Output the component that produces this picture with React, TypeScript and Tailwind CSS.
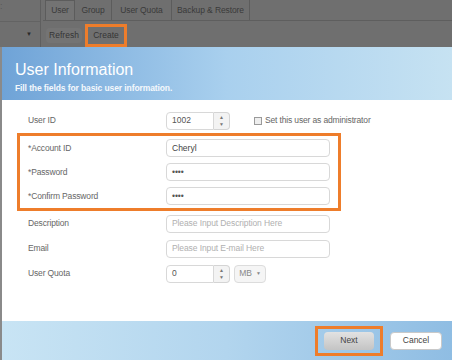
const font = { fontFamily: '"Liberation Sans", Arial, sans-serif' };

function Spinner() {
  return (
    <div className="flex h-[18px] w-[16px] flex-col items-center justify-center gap-[2px] rounded-r-sm border border-l-0 border-[#d4d4d4] bg-[#f3f3f3] text-[5px] leading-none text-[#777]">
      <span>▲</span>
      <span>▼</span>
    </div>
  );
}

function Field({ placeholder, value }: { placeholder?: string; value?: string }) {
  return (
    <div className="flex h-[18px] w-[164px] items-center rounded-sm border border-[#d8d8d8] bg-white px-[5px] text-[8.5px] tracking-[-0.1px]">
      {value ? (
        <span className="text-[#555]">{value}</span>
      ) : (
        <span className="text-[#b0b0b0]">{placeholder}</span>
      )}
    </div>
  );
}

function Row({ label, h = 'h-[25px]', children }: { label: string; h?: string; children: React.ReactNode }) {
  return (
    <div className={`flex items-center ${h}`}>
      <span className="w-[138px] text-[8.5px] tracking-[-0.15px] text-[#666]">{label}</span>
      {children}
    </div>
  );
}

export default function App() {
  return (
    <div className="flex h-[360px] w-[452px] flex-col overflow-hidden bg-[#6f6f6f]" style={font}>
      {/* Dimmed page behind the dialog */}
      <div className="flex h-[47px] shrink-0">
        <div className="flex w-[41px] flex-col border-r border-[#5f5f5f]">
          <div className="h-[22px] border-b border-[#636363] text-[9px] text-[#585858]">:</div>
          <div className="mt-[6px] flex h-[12px] items-center justify-end pr-[8px] text-[6px] text-[#2a2a2a]">▼</div>
        </div>
        <div className="flex flex-1 flex-col pl-[2px]">
          <div className="flex h-[23px] items-end whitespace-nowrap border-b border-[#5e5e5e] pl-[2px] text-[8.5px] tracking-[-0.1px] text-[#3a3a3a]">
            <div className="flex h-[20px] w-[30px] items-center justify-center border border-b-0 border-[#5c5c5c] bg-[#737373]">User</div>
            <div className="flex h-[20px] w-[37px] items-center justify-center border-r border-[#5c5c5c]">Group</div>
            <div className="flex h-[20px] w-[60px] items-center justify-center border-r border-[#5c5c5c]">User Quota</div>
            <div className="flex h-[20px] w-[78px] items-center justify-center border-r border-[#5c5c5c]">Backup &amp; Restore</div>
          </div>
          <div className="flex items-center gap-[3px] pl-[3px] pt-[3px] text-[8.5px] text-[#353535]">
            <div className="flex h-[15px] w-[36px] items-center justify-center rounded-sm bg-[#747474]">Refresh</div>
            <div className="flex h-[23px] w-[42px] items-center justify-center border-[3px] border-[#ee7d2b] bg-[#707070]">Create</div>
          </div>
        </div>
      </div>

      {/* Dialog */}
      <div className="flex flex-1 flex-col border-l-2 border-[#8a8a8a] bg-white">
        <div className="h-[53px] shrink-0 bg-gradient-to-r from-[#6fa3d7] via-[#a9d0ee] to-[#c6e2f2] pl-[13px] pt-[14px] text-white">
          <div className="text-[16px] leading-[18px]">User Information</div>
          <div className="mt-[5px] text-[8.5px] font-bold leading-none tracking-[-0.1px] text-[#f4f8fc]">Fill the fields for basic user information.</div>
        </div>

        <div className="flex-1 pl-[26px] pt-[8px]">
          <Row label="User ID">
            <div className="flex h-[18px] w-[48px] items-center rounded-l-sm border border-[#d8d8d8] px-[5px] text-[8.5px] text-[#555]">1002</div>
            <Spinner />
            <div className="ml-[24px] flex items-center gap-[3px] text-[8.5px] tracking-[-0.15px] text-[#666]">
              <div className="h-[8px] w-[8px] border border-[#9a9a9a] bg-[#eee]" />
              <span>Set this user as administrator</span>
            </div>
          </Row>
          <div className="-ml-[11px] w-[324px] border-[3px] border-[#ee7d2b] pl-[8px]">
            <Row label="*Account ID" h="h-[24px]">
              <div className="flex h-[18px] w-[164px] items-center rounded-sm border border-[#d8d8d8] bg-white px-[5px] text-[8.5px] text-[#444]">Cheryl</div>
            </Row>
            <Row label="*Password" h="h-[24px]">
              <Field value="••••" />
            </Row>
            <Row label="*Confirm Password" h="h-[24px]">
              <Field value="••••" />
            </Row>
          </div>
          <Row label="Description">
            <Field placeholder="Please Input Description Here" />
          </Row>
          <Row label="Email">
            <Field placeholder="Please Input E-mail Here" />
          </Row>
          <Row label="User Quota">
            <div className="flex h-[18px] w-[48px] items-center rounded-l-sm border border-[#d8d8d8] px-[5px] text-[8.5px] text-[#555]">0</div>
            <Spinner />
            <div className="ml-[4px] flex h-[18px] w-[32px] items-center justify-center gap-[4px] rounded-sm border border-[#dcdcdc] bg-[#f5f5f5] text-[8.5px] text-[#888]">
              <span>MB</span>
              <span className="text-[5px]">▼</span>
            </div>
          </Row>
        </div>

        <div className="flex h-[39px] shrink-0 items-center justify-end gap-[7px] bg-gradient-to-r from-[#c8e4f4] via-[#b2d5ee] to-[#8fbde3] pr-[10px]">
          <div className="flex h-[30px] w-[68px] items-center justify-center border-[3px] border-[#ee7d2b]">
            <div className="flex h-[18px] w-[50px] items-center justify-center rounded-sm bg-gradient-to-b from-[#e2e2e2] to-[#c4c4c4] text-[8.5px] text-[#444]">Next</div>
          </div>
          <div className="flex h-[18px] w-[52px] items-center justify-center rounded-sm border border-[#c9c9c9] bg-white text-[8.5px] text-[#444]">Cancel</div>
        </div>
      </div>
    </div>
  );
}
